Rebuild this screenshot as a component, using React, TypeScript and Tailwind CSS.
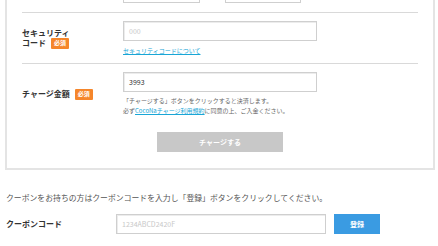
import React from "react";

function Badge() {
    return (
        <span className="inline-flex items-center justify-center w-[18px] h-[11px] ml-[5px] bg-[#f5862b] text-white text-[6px] leading-none font-bold rounded-[1px]">必須</span>
    );
}

function Field({ placeholder, value, className = "" }: { placeholder?: string; value?: string; className?: string }) {
    return (
        <div className={`h-[20px] flex items-center px-[5px] bg-white border border-[#cfcfcf] shadow-[inset_1px_1px_0_#ececec] text-[7px] ${className}`}>
            {value ? <span className="text-[#333]">{value}</span> : <span className="text-[#c8c8c8]">{placeholder}</span>}
        </div>
    );
}

export default function App() {
    return (
        <div className="w-[438px] h-[246px] overflow-hidden bg-white text-[#333] font-['Noto_Sans_CJK_JP','Noto_Sans',sans-serif]">
            {/* Payment panel */}
            <div className="ml-[5px] w-[430px] border-x-2 border-b-2 border-[#e4e4e4] px-[15px] pb-[16px]">
                {/* Expiry (cut off) */}
                <div className="h-[13px] border-b border-[#d9d9d9] flex pl-[101px] gap-[25px]">
                    <div className="w-[77px] h-[20px] -mt-[17px] border border-[#cfcfcf]" />
                    <div className="w-[76px] h-[20px] -mt-[17px] border border-[#cfcfcf]" />
                </div>

                {/* Security code */}
                <div className="flex items-center border-b border-[#d9d9d9] pt-[8px] pb-[8px]">
                    <div className="w-[101px] shrink-0 text-[8px] leading-[10px] font-bold">
                        <div>セキュリティ</div>
                        <div className="flex items-center">コード<Badge /></div>
                    </div>
                    <div>
                        <Field placeholder="000" className="w-[194px]" />
                        <a className="block mt-[6px] text-[6px] leading-[8px] text-[#19a6d6] underline decoration-[#19a6d6]">セキュリティコードについて</a>
                    </div>
                </div>

                {/* Charge amount */}
                <div className="flex items-center pt-[8px]">
                    <div className="w-[101px] shrink-0 flex items-center text-[8px] font-bold">チャージ金額<Badge /></div>
                    <div>
                        <Field value="3993" className="w-[194px]" />
                        <div className="mt-[4px] text-[6px] leading-[10px] text-[#666]">
                            <p>「チャージする」ボタンをクリックすると決済します。</p>
                            <p>必ず<a className="text-[#19a6d6] underline">CocoNaチャージ利用規約</a>に同意の上、ご入金ください。</p>
                        </div>
                    </div>
                </div>

                <div className="flex justify-center mt-[16px]">
                    <button className="w-[126px] h-[20px] bg-[#c8c8c8] text-white text-[7px] font-bold">チャージする</button>
                </div>
            </div>

            {/* Coupon */}
            <div className="pl-[6px] mt-[22px]">
                <p className="text-[7.85px] leading-[12px] text-[#555]">クーポンをお持ちの方はクーポンコードを入力し「登録」ボタンをクリックしてください。</p>
                <div className="flex items-center mt-[10px]">
                    <div className="w-[110px] shrink-0 text-[8px] font-bold">クーポンコード</div>
                    <Field placeholder="1234ABCD2420F" className="w-[210px]" />
                    <button className="ml-[8px] w-[46px] h-[20px] bg-[#3a9be2] text-white text-[7px] font-bold">登録</button>
                </div>
            </div>
        </div>
    );
}
